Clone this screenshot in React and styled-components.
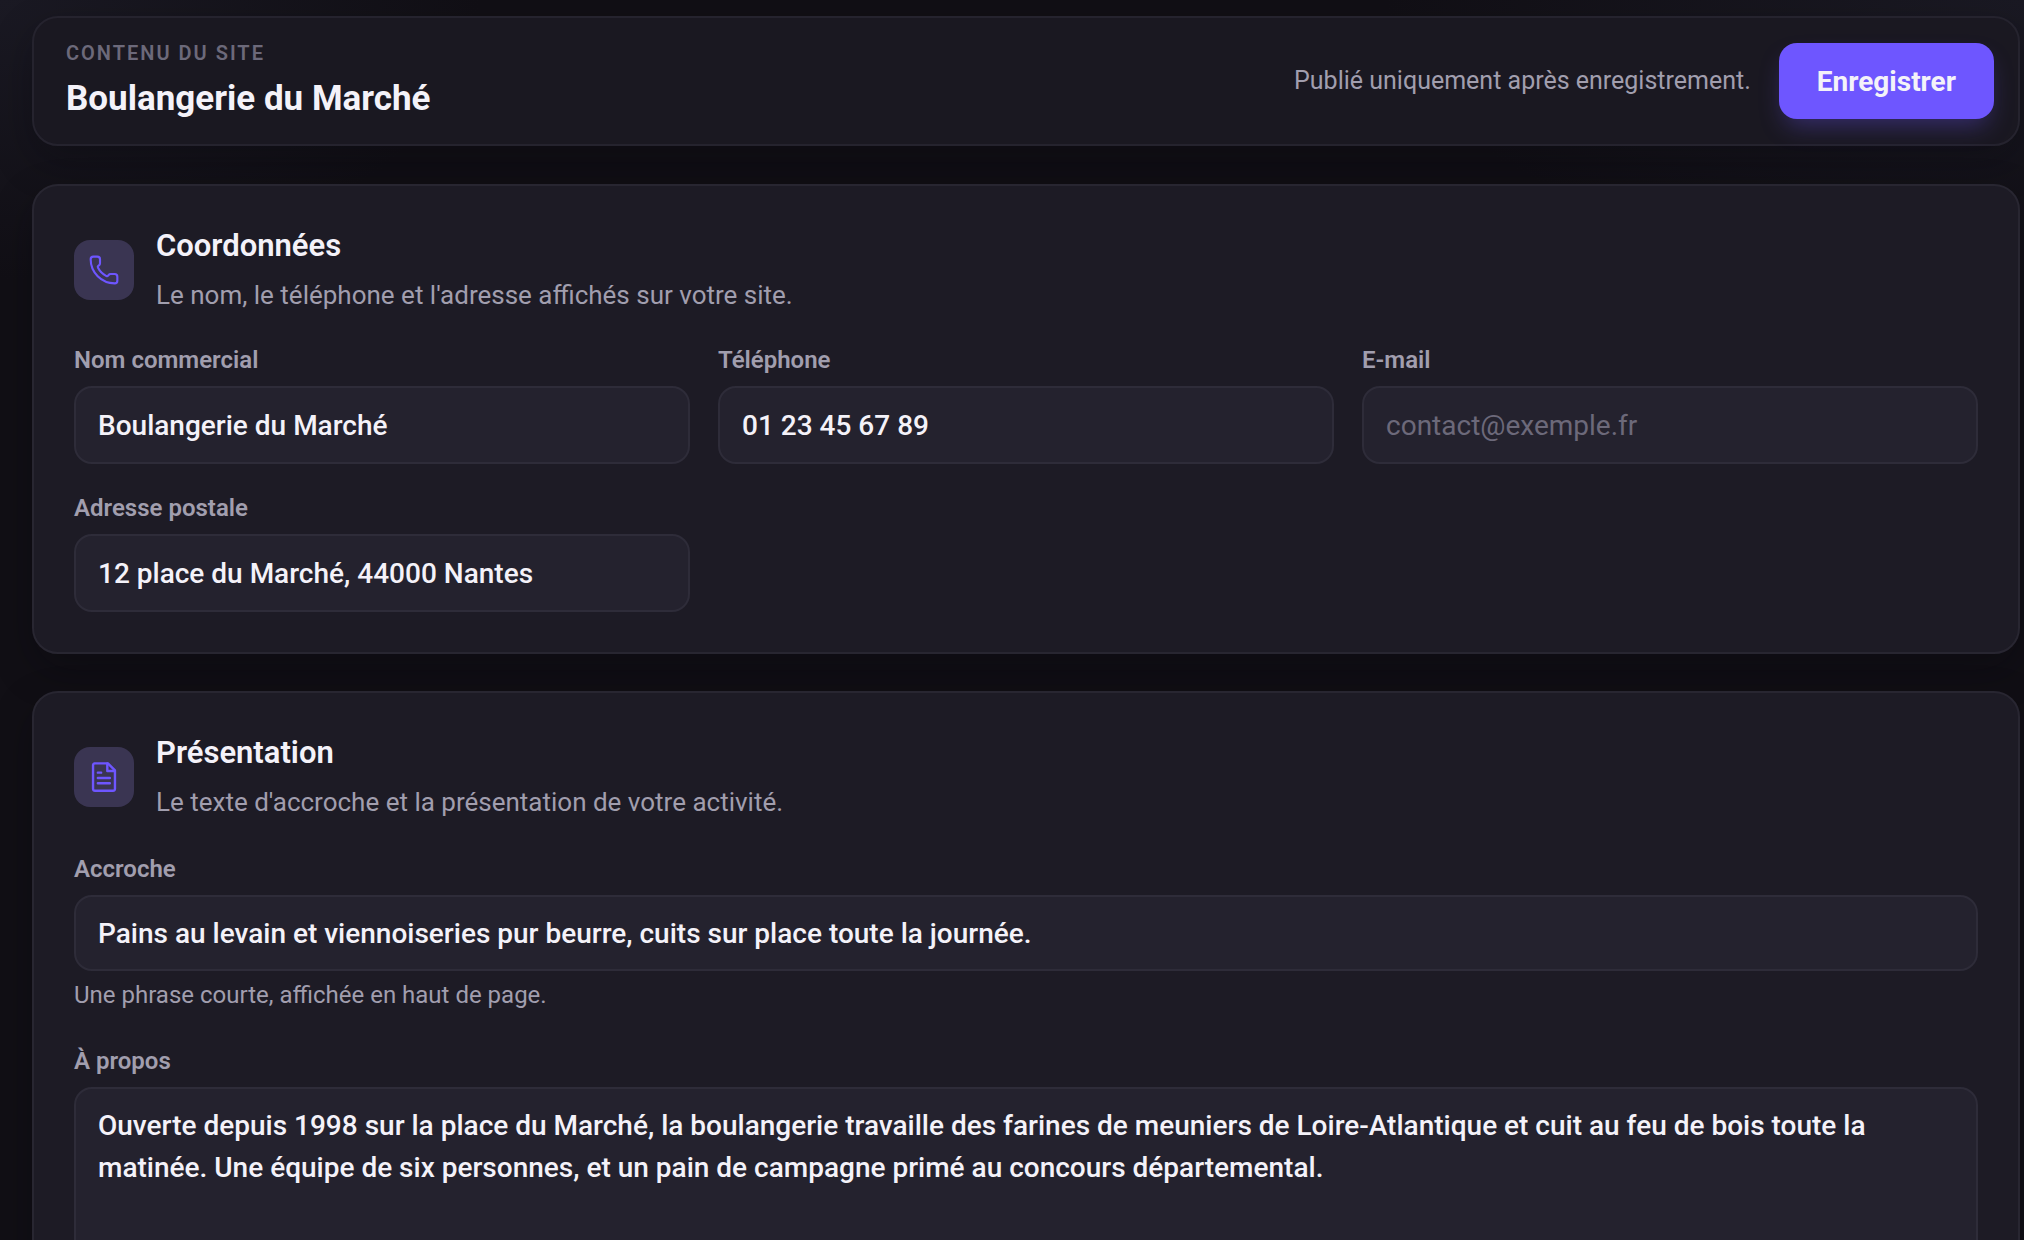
import React, { useId } from "react";
import styled, { createGlobalStyle } from "styled-components";
import { Phone } from "lucide-react";

const GlobalStyle = createGlobalStyle`
  *, *::before, *::after { box-sizing: border-box; }
  body {
    margin: 0;
    background: #110f15;
    color: #f4f2f9;
    font-family: Roboto, "Liberation Sans", sans-serif;
  }
  h1, h2, p { margin: 0; }
  input, textarea, button { font: inherit; color: inherit; }
`;

const Shell = styled.div`
  height: 100vh;
  overflow-y: auto;
  scrollbar-width: none;
  padding: 16px 4px 36px 32px;
  background:
    radial-gradient(ellipse 480px 280px at 0 0, #1a1923, transparent),
    radial-gradient(ellipse 640px 280px at 100% 0, #1a1923, transparent),
    #110f15;
`;

const TopBar = styled.header`
  display: flex;
  align-items: center;
  justify-content: space-between;
  gap: 28px;
  min-height: 130px;
  padding: 0 24px 0 32px;
  border: 2px solid #25232e;
  border-radius: 26px;
  background: #1a1821;
  box-shadow: 0 16px 40px rgba(8, 6, 12, 0.3);
`;

const Heading = styled.div`
  display: flex;
  flex-direction: column;
  gap: 12px;
`;

const Eyebrow = styled.p`
  font-size: 20px;
  line-height: 24px;
  font-weight: 600;
  letter-spacing: 2px;
  text-transform: uppercase;
  color: #6c697a;
`;

const SiteTitle = styled.h1`
  font-size: 35px;
  line-height: 44px;
  font-weight: 700;
`;

const Actions = styled.div`
  display: flex;
  align-items: center;
  gap: 28px;
`;

const Note = styled.p`
  font-size: 25px;
  line-height: 32px;
  color: #a19eae;
`;

const SaveButton = styled.button`
  height: 76px;
  padding: 0 38px;
  border: 0;
  border-radius: 18px;
  background: #6e56ff;
  color: #f4f2f9;
  font-size: 28px;
  font-weight: 700;
  cursor: pointer;
  box-shadow: 0 12px 24px -6px rgba(110, 86, 255, 0.35);
`;

const Sections = styled.main`
  display: flex;
  flex-direction: column;
  gap: 37px;
  margin-top: 38px;
`;

const Card = styled.section`
  padding: 40px;
  border: 2px solid #282631;
  border-radius: 26px;
  background: #1d1b25;
  box-shadow: 0 16px 40px rgba(8, 6, 12, 0.3);
`;

const CardHead = styled.div`
  display: flex;
  align-items: center;
  gap: 22px;
  margin-bottom: 30px;
`;

const IconTile = styled.span`
  display: grid;
  place-items: center;
  width: 60px;
  height: 60px;
  border-radius: 16px;
  background: #3a3552;
  color: #6e56ff;
`;

const CardTitle = styled.h2`
  font-size: 31px;
  line-height: 40px;
  font-weight: 600;
`;

const CardText = styled.p`
  margin-top: 10px;
  font-size: 26px;
  line-height: 38px;
  color: #a19eae;
`;

const FieldGrid = styled.div`
  display: grid;
  grid-template-columns: repeat(3, 1fr);
  gap: 28px;
`;

const FieldStack = styled.div`
  display: flex;
  flex-direction: column;
  gap: 34px;
  padding-top: 2px;
  input { height: 76px; }
`;

const FieldBox = styled.div`
  display: flex;
  flex-direction: column;
`;

const Label = styled.label`
  margin-bottom: 10px;
  font-size: 24px;
  line-height: 32px;
  font-weight: 600;
  color: #a19eae;
`;

const Input = styled.input`
  width: 100%;
  height: 78px;
  padding: 0 22px;
  border: 2px solid #2e2c39;
  border-radius: 18px;
  outline: none;
  background: #24222e;
  font-size: 28px;
  font-weight: 500;
  &::placeholder { color: #6c697a; opacity: 1; font-weight: 400; }
`;

const TextArea = styled.textarea`
  width: 100%;
  height: 260px;
  padding: 16px 22px;
  border: 2px solid #2e2c39;
  border-radius: 18px;
  outline: none;
  resize: none;
  background: #24222e;
  font-size: 28px;
  font-weight: 500;
  line-height: 42px;
`;

const Hint = styled.p`
  margin-top: 8px;
  font-size: 24px;
  line-height: 32px;
  color: #a19eae;
`;

function DocumentIcon() {
  return (
    <svg width="36" height="36" viewBox="0 0 24 24" fill="none" stroke="currentColor" strokeWidth="1.6" strokeLinecap="round" strokeLinejoin="round" aria-hidden="true">
      <path d="M14.6 2.9H5.6A1.3 1.3 0 0 0 4.7 4v16a1.3 1.3 0 0 0 1.3 1.2h12a1.3 1.3 0 0 0 1.3-1.2V7.6z" />
      <path d="M14.2 3v5h5" />
      <path d="M7.9 9.1h2.2M7.9 12.7h8M7.9 16.2h8" />
    </svg>
  );
}

function Field({ label, hint, multiline, ...rest }) {
  const id = useId();
  const Control = multiline ? TextArea : Input;
  return (
    <FieldBox>
      <Label htmlFor={id}>{label}</Label>
      <Control id={id} spellCheck={false} aria-describedby={hint ? `${id}-hint` : undefined} {...rest} />
      {hint && <Hint id={`${id}-hint`}>{hint}</Hint>}
    </FieldBox>
  );
}

function FormCard({ icon, title, text, children }) {
  return (
    <Card>
      <CardHead>
        <IconTile>{icon}</IconTile>
        <div>
          <CardTitle>{title}</CardTitle>
          <CardText>{text}</CardText>
        </div>
      </CardHead>
      {children}
    </Card>
  );
}

export default function App() {
  return (
    <Shell>
      <GlobalStyle />
      <TopBar>
        <Heading>
          <Eyebrow>Contenu du site</Eyebrow>
          <SiteTitle>Boulangerie du Marché</SiteTitle>
        </Heading>
        <Actions>
          <Note>Publié uniquement après enregistrement.</Note>
          <SaveButton type="button">Enregistrer</SaveButton>
        </Actions>
      </TopBar>
      <Sections>
        <FormCard
          icon={<Phone size={32} strokeWidth={1.6} aria-hidden="true" />}
          title="Coordonnées"
          text="Le nom, le téléphone et l'adresse affichés sur votre site."
        >
          <FieldGrid>
            <Field label="Nom commercial" defaultValue="Boulangerie du Marché" />
            <Field label="Téléphone" type="tel" defaultValue="01 23 45 67 89" />
            <Field label="E-mail" type="email" placeholder="contact@exemple.fr" />
            <Field label="Adresse postale" defaultValue="12 place du Marché, 44000 Nantes" />
          </FieldGrid>
        </FormCard>
        <FormCard
          icon={<DocumentIcon />}
          title="Présentation"
          text="Le texte d'accroche et la présentation de votre activité."
        >
          <FieldStack>
            <Field
              label="Accroche"
              hint="Une phrase courte, affichée en haut de page."
              defaultValue="Pains au levain et viennoiseries pur beurre, cuits sur place toute la journée."
            />
            <Field
              label="À propos"
              multiline
              defaultValue="Ouverte depuis 1998 sur la place du Marché, la boulangerie travaille des farines de meuniers de Loire-Atlantique et cuit au feu de bois toute la matinée. Une équipe de six personnes, et un pain de campagne primé au concours départemental."
            />
          </FieldStack>
        </FormCard>
      </Sections>
    </Shell>
  );
}
